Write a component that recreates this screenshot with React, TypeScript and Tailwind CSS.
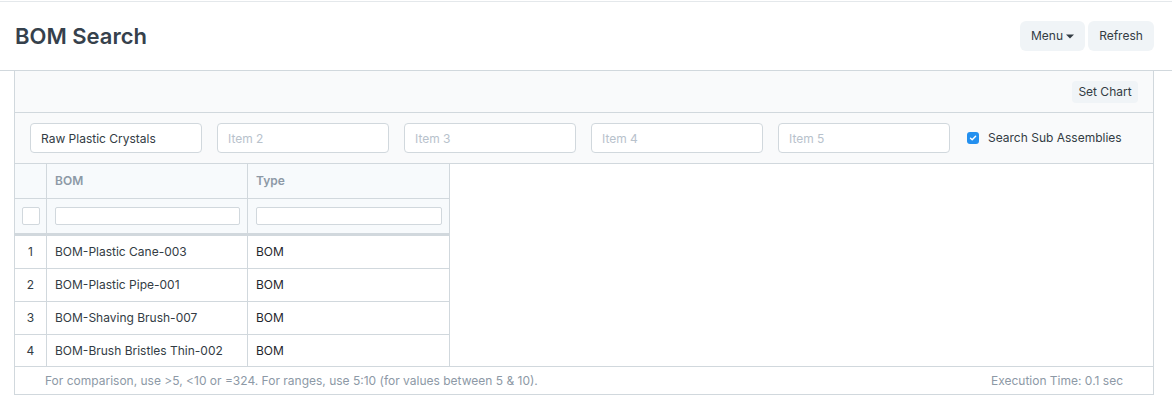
import React from "react";

const rows = [
  "BOM-Plastic Cane-003",
  "BOM-Plastic Pipe-001",
  "BOM-Shaving Brush-007",
  "BOM-Brush Bristles Thin-002",
];

const filters = ["Raw Plastic Crystals", "", "", "", ""];

const App = () => {
  return (
    <div className="w-[1172px] min-h-[409px] bg-white font-['Inter','Liberation_Sans',sans-serif] text-[#333c44]">
      <div className="h-px bg-white" />
      <div className="h-px bg-[#e4e8eb]" />

      {/* page head */}
      <header className="flex h-[69px] items-center justify-between border-b border-[#d1d8dd] pl-[15px] pr-[18px]">
        <h1 className="text-[22px] font-semibold leading-none text-[#36414c]">
          BOM Search
        </h1>
        <div className="flex items-center gap-[3px]">
          <button className="flex h-[30px] w-[65px] items-center justify-center gap-[3px] rounded-[6px] bg-[#f0f4f7] text-[12px] text-[#333c44]">
            Menu
            <svg width="8" height="5" viewBox="0 0 8 5" className="mt-[1px]">
              <path d="M0 0.5h8L4 4.5z" fill="#333c44" />
            </svg>
          </button>
          <button className="flex h-[30px] w-[66px] items-center justify-center rounded-[6px] bg-[#f0f4f7] text-[12px] text-[#333c44]">
            Refresh
          </button>
        </div>
      </header>

      {/* report panel */}
      <div className="ml-[14px] w-[1140px] border-x border-b border-[#d1d8dd]">
        <div className="flex h-[42px] items-center justify-end border-b border-[#d1d8dd] bg-[#f9fafb] pr-[15px]">
          <button className="h-[22px] w-[66px] rounded-[4px] bg-[#f0f4f7] text-[12px] text-[#333c44]">
            Set Chart
          </button>
        </div>

        <div className="flex h-[51px] items-center gap-[15px] border-b border-[#d1d8dd] bg-[#f9fafb] pl-[15px]">
          {filters.map((v, i) => (
            <input
              key={i}
              readOnly
              value={v}
              placeholder={`Item ${i + 1}`}
              className="h-[30px] w-[172px] rounded-[4px] border border-[#d1d8dd] bg-white px-[10px] text-[12px] text-[#333c44] outline-none placeholder:text-[#b8c2cc]"
            />
          ))}
          <label className="ml-[2px] flex items-center gap-[9px] text-[12px] text-[#333c44]">
            <span className="flex h-[12px] w-[12px] items-center justify-center rounded-[3px] bg-[#2490ef]">
              <svg width="8" height="8" viewBox="0 0 8 8">
                <path d="M1.5 4.2l1.7 1.6L6.6 2.3" fill="none" stroke="#fff" strokeWidth="1.4" strokeLinecap="round" strokeLinejoin="round" />
              </svg>
            </span>
            Search Sub Assemblies
          </label>
        </div>

        {/* datatable */}
        <div className="w-[435px] border-r border-[#d1d8dd]">
          <div className="flex h-[35px] border-b border-[#d1d8dd] bg-[#f7fafc] text-[12px] font-semibold text-[#8d99a6]">
            <div className="w-[32px] border-r border-[#d1d8dd]" />
            <div className="flex w-[201px] items-center border-r border-[#d1d8dd] pl-[8px]">BOM</div>
            <div className="flex w-[201px] items-center pl-[8px]">Type</div>
          </div>
          <div className="flex h-[37px] border-b-[3px] border-[#d1d8dd] bg-[#f7fafc]">
            <div className="flex w-[32px] items-center justify-center border-r border-[#d1d8dd]">
              <div className="h-[18px] w-[18px] rounded-[2px] border border-[#d1d8dd] bg-white" />
            </div>
            <div className="flex w-[201px] items-center border-r border-[#d1d8dd] pl-[8px] pr-[7px]">
              <div className="h-[18px] w-full rounded-[2px] border border-[#d1d8dd] bg-white" />
            </div>
            <div className="flex w-[201px] items-center pl-[8px] pr-[7px]">
              <div className="h-[18px] w-full rounded-[2px] border border-[#d1d8dd] bg-white" />
            </div>
          </div>
          {rows.map((name, i) => (
            <div
              key={name}
              className={`flex text-[12px] ${i < rows.length - 1 ? "h-[33px] border-b border-[#d1d8dd]" : "h-[31px]"}`}
            >
              <div className="flex w-[32px] items-center justify-center border-r border-[#d1d8dd] text-[#333c44]">
                {i + 1}
              </div>
              <div className="flex w-[201px] items-center border-r border-[#d1d8dd] pl-[8px] text-[#333c44]">
                {name}
              </div>
              <div className="flex w-[201px] items-center pl-[8px] text-[#1f272e]">BOM</div>
            </div>
          ))}
        </div>

        <div className="flex h-[28px] items-center justify-between border-t border-[#d1d8dd] px-[30px] text-[12px] text-[#8d99a6]">
          <span>For comparison, use &gt;5, &lt;10 or =324. For ranges, use 5:10 (for values between 5 &amp; 10).</span>
          <span>Execution Time: 0.1 sec</span>
        </div>
      </div>
    </div>
  );
};

export default App;
